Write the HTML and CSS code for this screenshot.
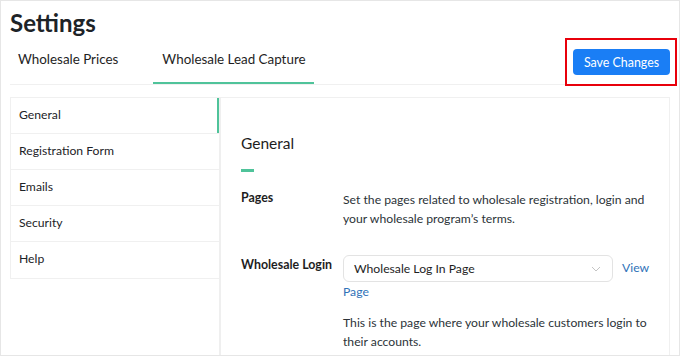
FILE: index.html
```html
<!DOCTYPE html>
<html lang="en">
<head>
<meta charset="utf-8">
<title>Settings</title>
<link rel="stylesheet" href="styles.css">
</head>
<body>
<div class="frame">
  <h1 class="title">Settings</h1>
  <div class="tabbar">
    <nav class="tabs">
      <a class="tab">Wholesale Prices</a>
      <a class="tab active">Wholesale Lead Capture</a>
    </nav>
    <div class="save-wrap">
      <button class="save">Save Changes</button>
    </div>
  </div>
  <div class="main">
    <ul class="side">
      <li class="side-item active">General</li>
      <li class="side-item">Registration Form</li>
      <li class="side-item">Emails</li>
      <li class="side-item">Security</li>
      <li class="side-item">Help</li>
    </ul>
    <section class="panel">
      <h2 class="panel-title">General</h2>
      <div class="accent"></div>
      <div class="row">
        <div class="label">Pages</div>
        <p class="desc">Set the pages related to wholesale registration, login and your wholesale program’s terms.</p>
      </div>
      <div class="row row-field">
        <div class="label">Wholesale Login</div>
        <div class="field">
          <div class="field-line"><span class="select"><span class="select-text">Wholesale Log In Page</span><svg class="chev" width="10" height="6" viewBox="0 0 10 6"><path d="M1 1l4 4 4-4" fill="none" stroke="#c4c4c4" stroke-width="1"/></svg></span><a class="link">View Page</a></div>
          <p class="desc help">This is the page where your wholesale customers login to their accounts.</p>
        </div>
      </div>
    </section>
  </div>
</div>
</body>
</html>
```
FILE: styles.css
```css
* { box-sizing: border-box; }
html, body { margin: 0; padding: 0; background: #fff; }
body {
  font-family: Lato, "Open Sans", sans-serif;
  color: #1e1e1e;
}
.frame {
  width: 680px;
  height: 356px;
  border: 1px solid #e6e6e6;
  padding: 0 9px;
  overflow: hidden;
}
.title {
  margin: 0;
  padding-top: 7px;
  font-size: 24px;
  line-height: 30px;
  font-weight: 700;
  color: #1d2327;
}
.tabbar {
  display: flex;
  justify-content: space-between;
  align-items: flex-end;
  border-bottom: 1px solid #f0f0f0;
  height: 47px;
}
.tabs { display: flex; gap: 27px; }
.tab {
  display: block;
  padding: 0 8px 0 8px;
  height: 46px;
  line-height: 42px;
  font-size: 13.4px;
  color: #1e1e1e;
  border-bottom: 2px solid transparent;
}
.tab.active {
  padding: 0 8px 0 9px;
  border-bottom-color: #4fc39a;
}
.save-wrap {
  position: relative;
  margin-bottom: 9px;
}
.save-wrap::after {
  content: "";
  position: absolute;
  left: -8px;
  right: -7px;
  top: -11px;
  bottom: -11px;
  border: 2px solid #e8000b;
  pointer-events: none;
}
.save {
  display: block;
  width: 97px;
  height: 26px;
  border: 0;
  border-radius: 4px;
  background: #1a7ef5;
  color: #fff;
  font-family: inherit;
  font-size: 12.4px;
  padding: 0;
}
.main {
  display: flex;
  margin-top: 12px;
  align-items: flex-start;
}
.side {
  list-style: none;
  margin: 0;
  padding: 0;
  width: 209px;
  border: 1px solid #f0f0f0;
  border-right: 0;
}
.side-item {
  height: 36px;
  line-height: 34px;
  padding-left: 8px;
  font-size: 12.2px;
  color: #1d2327;
  border-bottom: 1px solid #f0f0f0;
}
.side-item:last-child { border-bottom: 0; }
.side-item.active { box-shadow: inset -2px 0 0 #4fc39a; }
.panel {
  flex: 1;
  height: 300px;
  border: 1px solid #f0f0f0;
  border-left: 2px solid #efefef;
  padding: 34px 20px 0 20px;
}
.panel-title {
  margin: 0;
  font-size: 15.5px;
  line-height: 22px;
  font-weight: 400;
  color: #1e1e1e;
}
.accent {
  width: 13px;
  height: 3px;
  background: #4fc39a;
  margin-top: 15px;
}
.row {
  display: grid;
  grid-template-columns: 102px 1fr;
  margin-top: 16px;
}
.label {
  font-size: 12.4px;
  line-height: 20px;
  font-weight: 700;
  color: #1e1e1e;
}
.desc {
  margin: 2px 0 0;
  font-size: 12.2px;
  line-height: 19px;
  color: #2c3338;
}
.row-field { margin-top: 27px; }
.field-line {
  font-size: 12.2px;
  line-height: 20px;
}
.select {
  display: inline-flex;
  align-items: center;
  justify-content: space-between;
  width: 270px;
  height: 27px;
  padding: 0 10px 0 10px;
  margin-right: 9px;
  border: 1px solid #e3e3e3;
  border-radius: 6px;
  vertical-align: middle;
  color: #1e1e1e;
}
.chev { margin-right: 1px; }
.link { color: #2f72b8; }
.help { margin-top: 11px; }
```
